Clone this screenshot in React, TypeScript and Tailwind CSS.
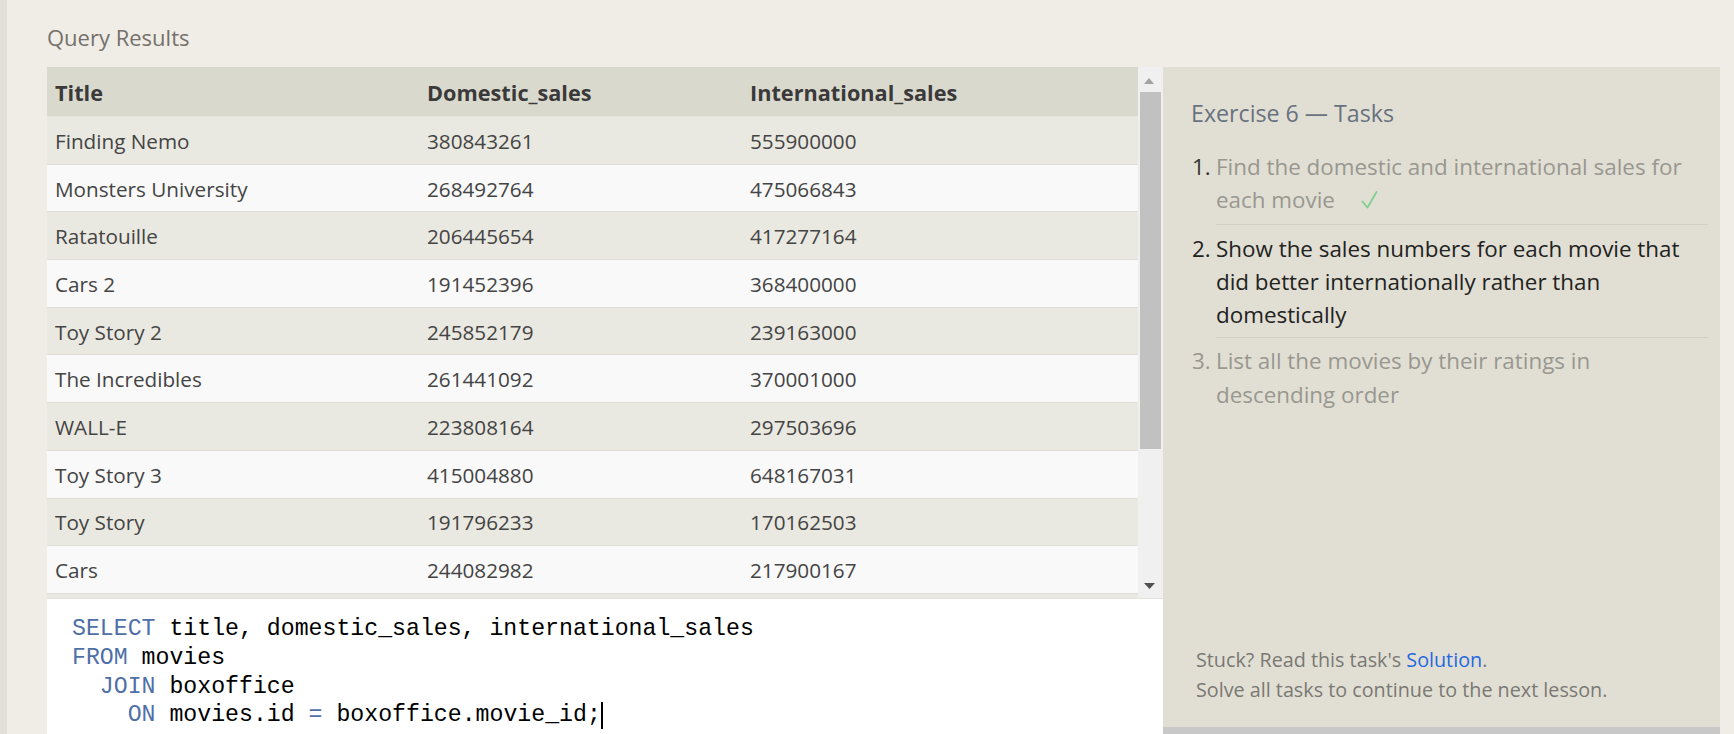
import React from "react";

const rows: [string, string, string][] = [
  ["Finding Nemo", "380843261", "555900000"],
  ["Monsters University", "268492764", "475066843"],
  ["Ratatouille", "206445654", "417277164"],
  ["Cars 2", "191452396", "368400000"],
  ["Toy Story 2", "245852179", "239163000"],
  ["The Incredibles", "261441092", "370001000"],
  ["WALL-E", "223808164", "297503696"],
  ["Toy Story 3", "415004880", "648167031"],
  ["Toy Story", "191796233", "170162503"],
  ["Cars", "244082982", "217900167"],
];

const sans = { fontFamily: '"Open Sans", "Noto Sans", sans-serif' };

function Kw({ children }: { children: React.ReactNode }) {
  return <span className="text-[#4f6fa8]">{children}</span>;
}

function Check() {
  return (
    <svg width="17" height="18" viewBox="0 0 17 18" className="inline-block ml-[26px] -mt-[4px] align-middle">
      <path d="M1.5 10.5 L6.5 16.5 L15.5 1" fill="none" stroke="#7fcf8e" strokeWidth="1.8" strokeLinecap="round" strokeLinejoin="round" />
    </svg>
  );
}

export default function App() {
  return (
    <div className="flex h-[734px] w-full overflow-hidden bg-[#f0ede6]" style={sans}>
      <div className="w-[7px] shrink-0 bg-[#e2dfd9]" />
      <div className="flex min-w-0 flex-1 flex-col pl-[40px] pr-[14px] pt-[22px]">
        <div className="h-[30px] text-[22px] leading-[30px] text-[#74716c]">Query Results</div>
        <div className="mt-[15px] flex min-h-0 flex-1">
          {/* left column */}
          <div className="flex w-[1116px] shrink-0 flex-col">
            <div className="flex h-[532px] shrink-0 border-b border-[#e3e2dc]">
              <div className="h-full w-[1091px] overflow-hidden">
                <div className="flex h-[50px] items-center border-b border-[#e6e5de] bg-[#dad9cd] pt-[3px] text-[21.7px] font-bold text-[#3a3a3a]">
                  <div className="w-[372px] pl-[8px]">Title</div>
                  <div className="w-[323px] pl-[8px]">Domestic_sales</div>
                  <div className="flex-1 pl-[8px]">International_sales</div>
                </div>
                {rows.map((r, i) => (
                  <div
                    key={r[0]}
                    className={`flex h-[47.7px] items-center border-b border-[#dfded8] pt-[2px] text-[20.7px] text-[#444] ${
                      i % 2 === 0 ? "bg-[#eae9e1]" : "bg-[#f9f9f9]"
                    }`}
                  >
                    <div className="w-[372px] pl-[8px]">{r[0]}</div>
                    <div className="w-[323px] pl-[8px]">{r[1]}</div>
                    <div className="flex-1 pl-[8px]">{r[2]}</div>
                  </div>
                ))}
                <div className="h-[47.7px] bg-[#eae9e1]" />
              </div>
              {/* scrollbar */}
              <div className="flex w-[25px] shrink-0 flex-col bg-[#f0f0f0]">
                <div className="flex h-[25px] items-center justify-center pr-[3px] pt-[2px]">
                  <svg width="10" height="6" viewBox="0 0 10 6">
                    <path d="M0 6 L5 0 L10 6 Z" fill="#a3a3a3" />
                  </svg>
                </div>
                <div className="ml-[2px] mr-[2px] h-[357px] bg-[#c1c1c1]" />
                <div className="flex-1" />
                <div className="flex h-[25px] items-center justify-center pr-[3px]">
                  <svg width="11" height="6" viewBox="0 0 11 6">
                    <path d="M0 0 L11 0 L5.5 6 Z" fill="#505050" />
                  </svg>
                </div>
              </div>
            </div>
            {/* editor */}
            <div
              className="flex-1 whitespace-pre bg-white pl-[25px] pt-[16px] text-[23.2px] leading-[28.75px] text-black"
              style={{ fontFamily: '"Liberation Mono", "DejaVu Sans Mono", monospace' }}
            >
              <div>
                <Kw>SELECT</Kw> title, domestic_sales, international_sales
              </div>
              <div>
                <Kw>FROM</Kw> movies
              </div>
              <div>
                {"  "}
                <Kw>JOIN</Kw> boxoffice
              </div>
              <div>
                {"    "}
                <Kw>ON</Kw> movies.id <Kw>=</Kw> boxoffice.movie_id;
                <span className="inline-block h-[27px] w-[2px] bg-black align-middle" />
              </div>
            </div>
          </div>
          {/* tasks panel */}
          <div className="flex min-w-0 flex-1 flex-col bg-[#e1dfd4]">
            <div className="flex flex-1 flex-col pl-[28px] pr-[12px] pt-[30px]">
              <div className="h-[32px] text-[23.2px] leading-[32px] text-[#68727e]">Exercise 6 — Tasks</div>
              <div className="mt-[16px] text-[22.4px] leading-[33.3px]">
                <div className="flex">
                  <div className="w-[25px] shrink-0 pl-[1px] pt-[5px] text-[#333]">1.</div>
                  <div className="flex-1 border-b border-[#d2d0c5] pb-[7px] pt-[5px] text-[#999790]">
                    Find the domestic and international sales for
                    <br />
                    each movie
                    <Check />
                  </div>
                </div>
                <div className="flex">
                  <div className="w-[25px] shrink-0 pl-[1px] pt-[7px] text-[#222]">2.</div>
                  <div className="flex-1 border-b border-[#d2d0c5] pb-[6px] pt-[7px] text-[#222]">
                    Show the sales numbers for each movie that
                    <br />
                    did better internationally rather than
                    <br />
                    domestically
                  </div>
                </div>
                <div className="flex">
                  <div className="w-[25px] shrink-0 pl-[1px] pt-[6px] text-[#999790]">3.</div>
                  <div className="flex-1 pb-[8px] pt-[6px] text-[#999790]">
                    List all the movies by their ratings in
                    <br />
                    descending order
                  </div>
                </div>
              </div>
              <div className="flex-1" />
              <div className="pb-[22px] pl-[5px] text-[19.75px] leading-[30px] text-[#7a7873]">
                <div>
                  Stuck? Read this task's <span className="text-[#2468e0]">Solution</span>.
                </div>
                <div>Solve all tasks to continue to the next lesson.</div>
              </div>
            </div>
            <div className="h-[7px] shrink-0 bg-[#c8c8c8]" />
          </div>
        </div>
      </div>
    </div>
  );
}
